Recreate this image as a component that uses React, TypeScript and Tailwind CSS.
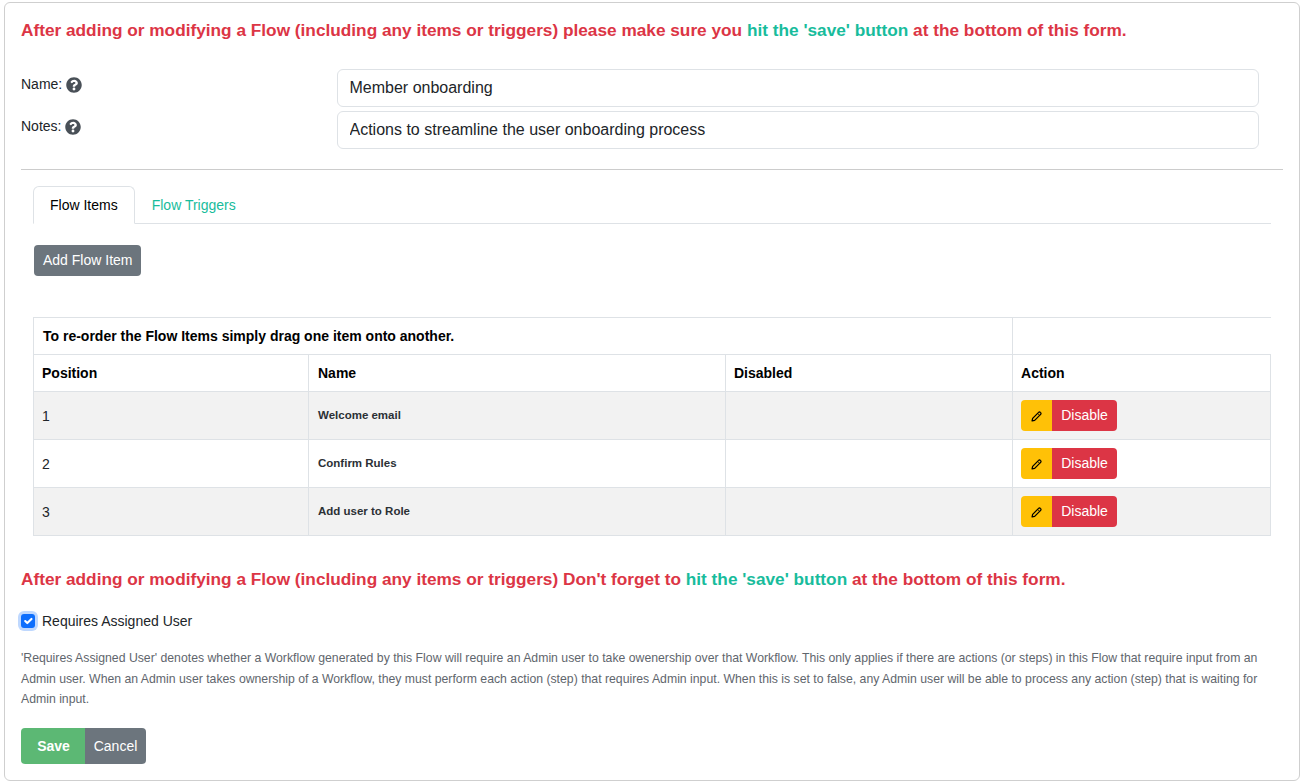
const heading = "text-[17.24px] leading-[21px] font-bold text-[#dc3545]";
const accent = "text-[#18bc9c]";

const flowItems = [
  { position: 1, name: "Welcome email" },
  { position: 2, name: "Confirm Rules" },
  { position: 3, name: "Add user to Role" },
];

function HelpIcon() {
  return (
    <svg className="w-4 h-4 ml-1 mt-[3px] text-[#495057]" viewBox="0 0 512 512" fill="currentColor">
      <path d="M504 256c0 137-111 248-248 248S8 393 8 256C8 119 119 8 256 8s248 111 248 248zM262.7 90c-54.500 0-89.300 23-116.500 63.800-3.500 5.300-2.400 12.400 2.700 16.300l34.700 26.300c5.200 3.900 12.600 3 16.700-2.100 17.900-22.700 30.100-35.800 57.300-35.800 20.400 0 45.700 13.100 45.700 32.900 0 15-12.400 22.700-32.500 34-23.500 13.200-54.600 29.600-54.600 70.600V302c0 6.600 5.400 12 12 12h56c6.600 0 12-5.400 12-12v-1.400c0-28.400 83-29.600 83-106.400 0-57.900-60-104.200-116.500-104.200zM256 338c-25.400 0-46 20.600-46 46 0 25.400 20.600 46 46 46s46-20.600 46-46c0-25.400-20.600-46-46-46z" />
    </svg>
  );
}

function PencilIcon() {
  return (
    <svg className="w-[11px] h-[11px] mt-px" viewBox="0 0 12 12" fill="none" stroke="currentColor" strokeWidth="1.4" strokeLinejoin="round">
      <path d="M8.300 1.500a1.300 1.300 0 0 1 1.900 0l.3.3a1.300 1.300 0 0 1 0 1.900L4 10.200 1.200 10.800 1.800 8z" />
      <path d="M7.200 2.600l2.200 2.200" strokeWidth="0.9" />
    </svg>
  );
}

function FieldRow({ label, value }: { label: string; value: string }) {
  return (
    <div className="flex">
      <label className="w-[316px] flex items-start pt-[5px] text-sm leading-[21px] text-[#212529]">
        {label}
        <HelpIcon />
      </label>
      <input
        readOnly
        value={value}
        className="w-[922px] h-[38px] pl-[11.5px] pr-3 rounded-md border border-[#dee2e6] bg-white text-base text-[#212529] outline-none"
      />
    </div>
  );
}

export default function App() {
  return (
    <div className="h-[784px] pt-[2px] pl-1 pr-[3px] pb-1 bg-white font-['Liberation_Sans',Arial,sans-serif] overflow-hidden">
      <div className="h-[779px] rounded-md border border-[#cfcfcf] pt-[17px] px-4">
        <h4 className={heading}>
          After adding or modifying a Flow (including any items or triggers) please make sure you{" "}
          <span className={accent}>hit the 'save' button</span> at the bottom of this form.
        </h4>

        <div className="mt-[28px] flex flex-col gap-1">
          <FieldRow label="Name:" value="Member onboarding" />
          <FieldRow label="Notes:" value="Actions to streamline the user onboarding process" />
        </div>

        <hr className="mt-5 border-t border-[#cccccc]" />

        <div className="px-3 mt-[16px]">
          {/* Tabs */}
          <div className="flex border-b border-[#dee2e6] text-sm h-[38px]">
            <div className="h-[38px] px-4 flex items-center rounded-t-md border border-[#dee2e6] border-b-white bg-white text-black">
              Flow Items
            </div>
            <div className="h-[38px] pl-[17px] pr-4 flex items-center text-[#18bc9c]">Flow Triggers</div>
          </div>

          <button className="mt-[21px] ml-px h-[31px] px-[9px] pb-px rounded bg-[#6c757d] text-sm text-white">
            Add Flow Item
          </button>

          <table className="mt-[41px] w-[1238px] table-fixed border-collapse text-sm text-[#212529]">
            <colgroup>
              <col className="w-[275px]" />
              <col className="w-[417px]" />
              <col className="w-[287px]" />
              <col className="w-[258px]" />
            </colgroup>
            <thead>
              <tr className="h-[37px] text-black">
                <th colSpan={3} className="border border-[#dee2e6] pl-[9px] pr-2 text-left font-bold">
                  To re-order the Flow Items simply drag one item onto another.
                </th>
                <th className="border-t border-l border-[#dee2e6]" />
              </tr>
              <tr className="h-[37px] text-black">
                <th className="border border-[#dee2e6] px-2 text-left font-bold">Position</th>
                <th className="border border-[#dee2e6] pl-[9px] pr-2 text-left font-bold">Name</th>
                <th className="border border-[#dee2e6] px-2 text-left font-bold">Disabled</th>
                <th className="border border-[#dee2e6] px-2 text-left font-bold">Action</th>
              </tr>
            </thead>
            <tbody>
              {flowItems.map((item) => (
                <tr key={item.position} className={item.position % 2 === 1 ? "h-12 bg-[#f2f2f2]" : "h-12 bg-white"}>
                  <td className="border border-[#dee2e6] px-2">{item.position}</td>
                  <td className="border border-[#dee2e6] pl-[9px] pr-2 pb-px text-[11.5px] font-bold text-[#2b3035]">{item.name}</td>
                  <td className="border border-[#dee2e6] px-2" />
                  <td className="border border-[#dee2e6] px-2">
                    <div className="flex h-[31px]">
                      <button className="w-[31px] flex items-center justify-center rounded-l bg-[#ffc107] text-black">
                        <PencilIcon />
                      </button>
                      <button className="w-[65px] pb-px rounded-r bg-[#dc3545] text-sm text-white">Disable</button>
                    </div>
                  </td>
                </tr>
              ))}
            </tbody>
          </table>
        </div>

        <h4 className={`${heading} mt-[33px]`}>
          After adding or modifying a Flow (including any items or triggers) Don't forget to{" "}
          <span className={accent}>hit the 'save' button</span> at the bottom of this form.
        </h4>

        <div className="mt-[20px] flex items-center h-[21px] text-sm text-[#212529]">
          <span className="w-[14px] h-[14px] flex items-center justify-center rounded-[3px] bg-[#0d6efd] ring-[3px] ring-[#bfd8fe]">
            <svg viewBox="0 0 20 20" className="w-[14px] h-[14px]" fill="none" stroke="white" strokeWidth="3" strokeLinecap="round" strokeLinejoin="round">
              <path d="M6 10l3 3 6-6" />
            </svg>
          </span>
          <span className="ml-[7px]">Requires Assigned User</span>
        </div>

        <p className="mt-[17px] text-[12.25px] leading-[20.5px] text-[#5f666d]">
          'Requires Assigned User' denotes whether a Workflow generated by this Flow will require an Admin user to take owenership over that Workflow. This only applies if there are actions (or steps) in this Flow that require input from an Admin user. When an Admin user takes ownership of a Workflow, they must perform each action (step) that requires Admin input. When this is set to false, any Admin user will be able to process any action (step) that is waiting for Admin input.
        </p>

        <div className="mt-[18px] flex h-9 text-sm">
          <button className="w-16 pl-px rounded-l bg-[#5cb874] font-bold text-white">Save</button>
          <button className="w-[61px] rounded-r bg-[#6c757d] text-white">Cancel</button>
        </div>
      </div>
    </div>
  );
}
